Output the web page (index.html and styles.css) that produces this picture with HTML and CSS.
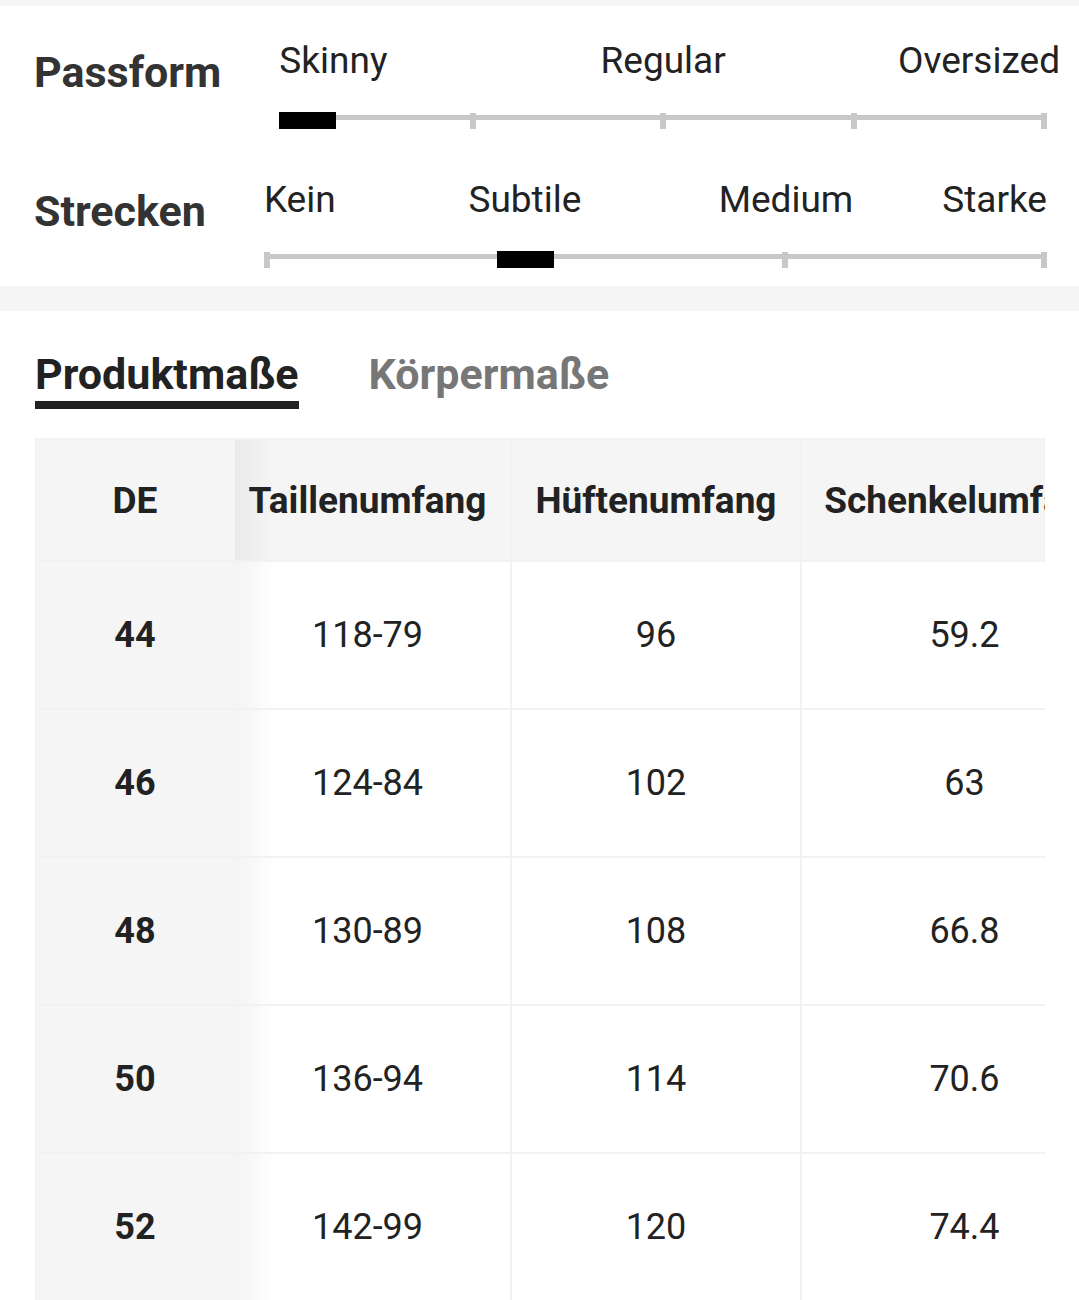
FILE: index.html
```html
<!DOCTYPE html>
<html lang="de">
<head>
<meta charset="utf-8">
<title>Größentabelle</title>
<link rel="stylesheet" href="styles.css">
</head>
<body>
<div class="strip strip-top"></div>
<section class="fit">
  <div class="fit-row">
    <div class="fit-label">Passform</div>
    <div class="slider">
      <div class="opts opts-5">
        <span class="opt o-skinny">Skinny</span>
        <span class="opt o-regular">Regular</span>
        <span class="opt o-oversized">Oversized</span>
      </div>
      <div class="track">
        <i class="tick"></i><i class="tick"></i><i class="tick"></i><i class="tick"></i><i class="tick"></i>
        <b class="knob knob-start"></b>
      </div>
    </div>
  </div>
  <div class="fit-row">
    <div class="fit-label">Strecken</div>
    <div class="slider">
      <div class="opts opts-4">
        <span class="opt o-kein">Kein</span>
        <span class="opt o-subtile">Subtile</span>
        <span class="opt o-medium">Medium</span>
        <span class="opt o-starke">Starke</span>
      </div>
      <div class="track">
        <i class="tick"></i><i class="tick"></i><i class="tick"></i><i class="tick"></i>
        <b class="knob knob-third"></b>
      </div>
    </div>
  </div>
</section>
<div class="strip strip-mid"></div>
<section class="measure">
  <div class="tabs">
    <span class="tab tab-active">Produktmaße</span>
    <span class="tab">Körpermaße</span>
  </div>
  <div class="table-wrap">
    <table class="size-table">
      <colgroup>
        <col class="c1"><col class="c2"><col class="c3"><col class="c4">
      </colgroup>
      <thead>
        <tr><th class="sticky">DE</th><th>Taillenumfang</th><th>Hüftenumfang</th><th>Schenkelumfang</th></tr>
      </thead>
      <tbody>
        <tr><td class="sticky">44</td><td>118-79</td><td>96</td><td>59.2</td></tr>
        <tr><td class="sticky">46</td><td>124-84</td><td>102</td><td>63</td></tr>
        <tr><td class="sticky">48</td><td>130-89</td><td>108</td><td>66.8</td></tr>
        <tr><td class="sticky">50</td><td>136-94</td><td>114</td><td>70.6</td></tr>
        <tr><td class="sticky">52</td><td>142-99</td><td>120</td><td>74.4</td></tr>
      </tbody>
    </table>
  </div>
</section>
</body>
</html>
```
FILE: styles.css
```css
html, body {
  margin: 0;
  padding: 0;
  background: #fff;
  font-family: Roboto, "Liberation Sans", Arial, sans-serif;
  color: #222;
  overflow: hidden;
}

.strip { background: #f5f5f5; }
.strip-top { height: 6px; }
.strip-mid { height: 25px; }

.fit {
  padding: 33px 32px 18px 34px;
  display: flex;
  flex-direction: column;
  gap: 49px;
}

.fit-row {
  display: flex;
  align-items: flex-start;
}

.fit-label {
  font-size: 43px;
  font-weight: 700;
  color: #333;
  line-height: 50px;
  margin-top: 8px;
  margin-right: 58px;
  white-space: nowrap;
}

.slider {
  flex: 1;
  min-width: 0;
  display: flex;
  flex-direction: column;
  gap: 31px;
}

.opts {
  display: grid;
  font-size: 37px;
  line-height: 43px;
  color: #222;
}
.opts-5 { grid-template-columns: repeat(8, minmax(0, 1fr)); }
.opts-4 { grid-template-columns: repeat(6, minmax(0, 1fr)); }

.opt { white-space: nowrap; grid-row: 1; }
.o-skinny { grid-column: 1 / span 2; justify-self: start; }
.o-regular { grid-column: 4 / span 2; justify-self: center; }
.o-oversized { grid-column: 7 / span 2; justify-self: end; margin-right: -13px; }
.o-kein { grid-column: 1 / span 2; justify-self: start; }
.o-subtile { grid-column: 2 / span 2; justify-self: center; }
.o-medium { grid-column: 4 / span 2; justify-self: center; }
.o-starke { grid-column: 5 / span 2; justify-self: end; }

.track {
  position: relative;
  height: 16px;
  display: flex;
  justify-content: space-between;
  background: linear-gradient(#c8c8c8, #c8c8c8) 0 2px / 100% 5px no-repeat;
}
.tick {
  display: block;
  width: 6px;
  height: 16px;
  background: #c8c8c8;
}
.knob {
  position: absolute;
  top: -1px;
  width: 57px;
  height: 17px;
  background: #000;
}
.knob-start { left: 0; }
.knob-third { left: calc(33.333% - 28px); }

.measure {
  padding: 38px 0 0 35px;
}

.tabs {
  display: flex;
  gap: 70px;
  align-items: flex-start;
}
.tab {
  font-size: 43px;
  font-weight: 700;
  line-height: 50px;
  color: #777;
  padding-bottom: 2px;
  border-bottom: 8px solid transparent;
  white-space: nowrap;
}
.tab-active {
  color: #222;
  border-bottom-color: #222;
}

.table-wrap {
  margin-top: 29px;
  width: 1010px;
  overflow: hidden;
}

.size-table {
  border-collapse: collapse;
  table-layout: fixed;
  width: 1093px;
  font-size: 36px;
}
.c1 { width: 200px; }
.c2 { width: 276px; }
.c3 { width: 290px; }
.c4 { width: 327px; }

.size-table th,
.size-table td {
  text-align: center;
  white-space: nowrap;
  padding: 0;
  border: 2px solid #f2f2f2;
  border-left: 0;
}
.size-table th {
  height: 120px;
  background: #f5f5f5;
  font-size: 37px;
  font-weight: 700;
  color: #222;
}
.size-table td {
  height: 146px;
  color: #222;
}
.size-table th:nth-child(2),
.size-table td:nth-child(2) {
  border-left: 0;
  padding-right: 10px;
  background-image: linear-gradient(90deg, rgba(0,0,0,0.045), rgba(0,0,0,0) 40px);
}
.size-table th:nth-child(3),
.size-table td:nth-child(3),
.size-table th:nth-child(4),
.size-table td:nth-child(4) {
  border-left: 2px solid #f2f2f2;
}
.size-table .sticky {
  background-color: #f5f5f5;
  font-weight: 700;
  border-right: 0;
}
```
